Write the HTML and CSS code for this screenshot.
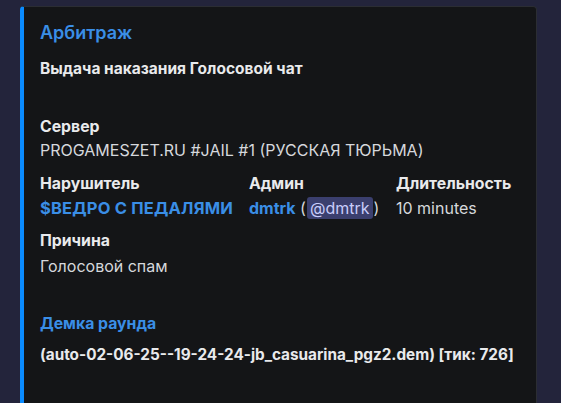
FILE: index.html
```html
<!DOCTYPE html>
<html lang="ru">
<head>
<meta charset="utf-8">
<link rel="stylesheet" href="styles.css">
</head>
<body>
<div class="embed">
  <div class="title">Арбитраж</div>
  <div class="desc">Выдача наказания Голосовой чат</div>
  <div class="fields">
    <div class="field full">
      <div class="fname">Сервер</div>
      <div class="fvalue">PROGAMESZET.RU #JAIL #1 (РУССКАЯ ТЮРЬМА)</div>
    </div>
    <div class="row3">
      <div class="field">
        <div class="fname">Нарушитель</div>
        <div class="fvalue"><span class="link caps">$ВЕДРО С ПЕДАЛЯМИ</span></div>
      </div>
      <div class="field">
        <div class="fname">Админ</div>
        <div class="fvalue"><span class="link">dmtrk</span> (<span class="mention">@dmtrk</span>)</div>
      </div>
      <div class="field">
        <div class="fname">Длительность</div>
        <div class="fvalue">10 minutes</div>
      </div>
    </div>
    <div class="field full">
      <div class="fname">Причина</div>
      <div class="fvalue">Голосовой спам</div>
    </div>
    <div class="field full demo">
      <div class="fname blue">Демка раунда</div>
      <div class="fvalue strong">(auto-02-06-25--19-24-24-jb_casuarina_pgz2.dem) [тик: 726]</div>
    </div>
  </div>
</div>
</body>
</html>
```
FILE: styles.css
```css
html, body {
  margin: 0;
  padding: 0;
  background: #23243b;
  height: 100%;
  overflow: hidden;
}
body {
  font-family: Inter, "Noto Sans", sans-serif;
  color: #dbdee1;
}
.embed {
  margin: 6px 0 0 20px;
  width: 517px;
  height: 420px;
  background: #141517;
  border: 1px solid #2b2d33;
  border-left: 4px solid #0a8bff;
  border-radius: 4px;
  padding: 15px 0 0 16px;
  box-sizing: border-box;
}
.title {
  font-size: 18px;
  font-weight: 600;
  line-height: 22px;
  color: #3a8ee6;
}
.desc {
  margin-top: 14px;
  font-size: 15.5px;
  font-weight: 700;
  line-height: 22px;
  color: #e9eaec;
}
.fields {
  margin-top: 36px;
  display: flex;
  flex-direction: column;
}
.fname {
  font-size: 15.8px;
  font-weight: 700;
  line-height: 22px;
  color: #e9eaec;
}
.fvalue {
  font-size: 16px;
  font-weight: 400;
  line-height: 22px;
  color: #d6d8dc;
  margin-top: 1px;
}
.row3 {
  display: grid;
  grid-template-columns: 209px 147px auto;
  margin-top: 12px;
}
.row3 .fvalue { margin-top: 2px; }
.field.full + .field.full { margin-top: 11px; }
.row3 + .field { margin-top: 11px; }
.row3 + .field .fvalue { margin-top: 3px; }
.field.demo { margin-top: 36px !important; }
.field.demo .fvalue { margin-top: 9px; font-size: 15.3px; }
.blue { color: #3a8ee6; }
.strong { font-weight: 700; color: #e9eaec; }
.link {
  color: #3a8ee6;
  font-weight: 700;
}
.caps { font-size: 16.5px; letter-spacing: 0.2px; }
.mention {
  background: #3b3f6e;
  color: #c9cdfb;
  border-radius: 3px;
  padding: 1px 3px;
  margin: 0 1px;
}
```
